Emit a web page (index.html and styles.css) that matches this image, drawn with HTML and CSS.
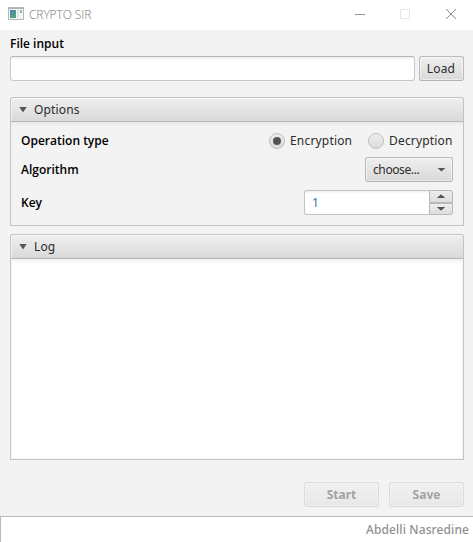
FILE: index.html
```html
<!DOCTYPE html>
<html lang="en">
<head>
<meta charset="utf-8">
<title>CRYPTO SIR</title>
<link rel="stylesheet" href="styles.css">
</head>
<body>
<header class="titlebar">
  <svg class="app-icon" width="16" height="16" viewBox="0 0 16 16">
    <defs><linearGradient id="sea" x1="0" y1="0" x2="1" y2="1"><stop offset="0" stop-color="#4d83b5"/><stop offset="1" stop-color="#58aa69"/></linearGradient></defs>
    <rect x=".5" y=".5" width="15" height="12" fill="#f5f5f5" stroke="#b1b7bd"/>
    <path d="M1 1.500h14" stroke="#a9b3be"/>
    <rect x="2" y="3" width="6" height="8" fill="url(#sea)"/>
    <rect x="9" y="3" width="2" height="8" fill="#e2e4e4"/>
    <rect x="12" y="3" width="2" height="3" fill="#8ebba6"/>
  </svg>
  <span class="title">CRYPTO SIR</span>
  <svg class="controls" width="103" height="12" viewBox="0 0 103 12" fill="none">
    <path d="M0 5.500h10" stroke="#999"/>
    <rect x="45.500" y=".5" width="9" height="9" stroke="#e6e6e6"/>
    <path d="M91 0l10 10M101 0l-10 10" stroke="#888"/>
  </svg>
</header>
<main class="content">
  <label class="label file-label" for="file">File input</label>
  <div class="file-row">
    <input class="field" id="file" type="text">
    <button class="button load">Load</button>
  </div>
  <section class="pane options">
    <h2 class="pane-head"><i class="arrow down large"></i><span>Options</span></h2>
    <div class="pane-body">
      <div class="row type-row">
        <span class="label type-label">Operation type</span>
        <span class="radio"><i class="dot on"></i><span>Encryption</span></span>
        <span class="radio"><i class="dot"></i><span>Decryption</span></span>
      </div>
      <div class="row algorithm-row">
        <span class="label">Algorithm</span>
        <button class="button choice"><span>choose...</span><i class="arrow down"></i></button>
      </div>
      <div class="row key-row">
        <span class="label">Key</span>
        <div class="spinner">
          <span class="value">1</span>
          <div class="steps"><button><i class="arrow up"></i></button><button><i class="arrow down"></i></button></div>
        </div>
      </div>
    </div>
  </section>
  <section class="pane log">
    <h2 class="pane-head"><i class="arrow down large"></i><span>Log</span></h2>
    <div class="pane-body"></div>
  </section>
  <div class="actions">
    <button class="button" disabled>Start</button>
    <button class="button" disabled>Save</button>
  </div>
</main>
<footer class="footer"><span>Abdelli Nasredine</span></footer>
</body>
</html>
```

FILE: styles.css
```css
* { box-sizing: border-box; }
body {
  margin: 0;
  width: 473px;
  height: 542px;
  overflow: hidden;
  display: flex;
  flex-direction: column;
  background: #f3f3f3;
  color: #2b2b2b;
  font: 12px/16px "Noto Sans", "Open Sans", sans-serif;
}
button, input { font: inherit; color: inherit; margin: 0; padding: 0; }
.titlebar {
  height: 30px;
  display: flex;
  align-items: center;
  padding: 0 15px 0 8px;
  background: #fff;
}
.title { margin-left: 5px; color: #777; font-weight: 300; font-family: "Open Sans", sans-serif; letter-spacing: -.1px; }
.controls { margin-left: auto; }
.content { flex: 1; padding: 6px 9px 0 10px; display: flex; flex-direction: column; }
.label { color: #000; font-weight: 600; font-family: "Open Sans", sans-serif; }
.file-label { height: 20px; }
.file-row { display: flex; gap: 4px; height: 25px; }
.field {
  flex: 1;
  min-width: 0;
  border: 1px solid #c8c8c8;
  border-top-color: #b5b5b5;
  border-radius: 3px;
  background: linear-gradient(#eee, #fff 3px);
  outline: none;
}
.button {
  height: 25px;
  border: 1px solid #bababa;
  border-bottom-color: #b3b3b3;
  border-radius: 3px;
  background: linear-gradient(#efefef, #d9d9d9);
  box-shadow: inset 0 0 0 1px rgba(255, 255, 255, .5);
}
.load { width: 45px; padding-right: 1px; letter-spacing: .15px; }
.pane { display: flex; flex-direction: column; }
.pane-head {
  height: 25px;
  margin: 0;
  padding-left: 8px;
  display: flex;
  align-items: center;
  gap: 6px;
  font-size: 12px;
  font-weight: 400;
  letter-spacing: .15px;
  border: 1px solid #c4c4c4;
  border-bottom-color: #b5b5b5;
  border-radius: 3px 3px 0 0;
  background: linear-gradient(#efefef, #d9d9d9);
  box-shadow: inset 1px 1px 0 rgba(255, 255, 255, .6);
}
.pane-body { flex: 1; border: 1px solid #c4c4c4; border-top: 0; }
.options { height: 129px; margin-top: 16px; }
.options .pane-body { padding: 6px 10px 0; background: linear-gradient(#e9e9e9, #f3f3f3 5px); }
.log { height: 226px; margin-top: 8px; }
.log .pane-body { background: linear-gradient(#f0f0f0, #fff 5px); box-shadow: inset -1px -1px #f5f5f5, inset 1px 0 #f5f5f5; }
.arrow { display: block; width: 9px; height: 4px; background: #555; flex: none; }
.down { clip-path: polygon(0 0, 100% 0, 50% 100%); }
.up { clip-path: polygon(0 100%, 100% 100%, 50% 0); }
.large { width: 8px; height: 6px; }
.pane-head .large { margin-right: 1px; }
.row { display: flex; align-items: center; justify-content: space-between; }
.type-row { height: 26px; }
.type-label { flex: 1; }
.radio { display: flex; align-items: center; gap: 5px; width: 84px; white-space: nowrap; letter-spacing: .18px; }
.radio + .radio { width: 85px; margin-left: 15px; }
.dot {
  flex: none;
  width: 16px;
  height: 16px;
  border: 1px solid #bdbdbd;
  border-radius: 50%;
  background: linear-gradient(#eee, #dcdcdc);
  display: grid;
  place-items: center;
}
.on::after { content: ""; width: 8px; height: 8px; border-radius: 50%; background: #555; }
.algorithm-row { height: 25px; margin-top: 3px; }
.choice { width: 88px; padding: 0 6px 0 7px; display: flex; align-items: center; justify-content: space-between; letter-spacing: -.4px; }
.key-row { height: 25px; margin-top: 8px; }
.spinner { display: flex; width: 149px; height: 25px; }
.value {
  flex: 1;
  padding: 4px 7px;
  color: #2675a8;
  border: 1px solid #c4c4c4;
  border-right: 0;
  border-radius: 3px 0 0 3px;
  background: linear-gradient(#f0f0f0, #fff 3px);
}
.steps { width: 24px; display: flex; flex-direction: column; }
.steps button {
  flex: 1;
  display: grid;
  place-items: center;
  border: 1px solid #b8b8b8;
  background: linear-gradient(#eee, #ddd);
}
.steps button:first-child { border-radius: 0 3px 0 0; }
.steps button:last-child { border-radius: 0 0 3px; }
.actions { display: flex; justify-content: flex-end; gap: 10px; margin-top: 22px; }
.actions .button { width: 75px; font-weight: 700; opacity: .4; }
.footer {
  height: 26px;
  border: solid #bababa;
  border-width: 1px 0 0 1px;
  background: #fff;
  color: #909090;
  text-align: right;
  padding: 5px 4px 0;
  font-weight: 500;
  letter-spacing: .1px;
}
```
